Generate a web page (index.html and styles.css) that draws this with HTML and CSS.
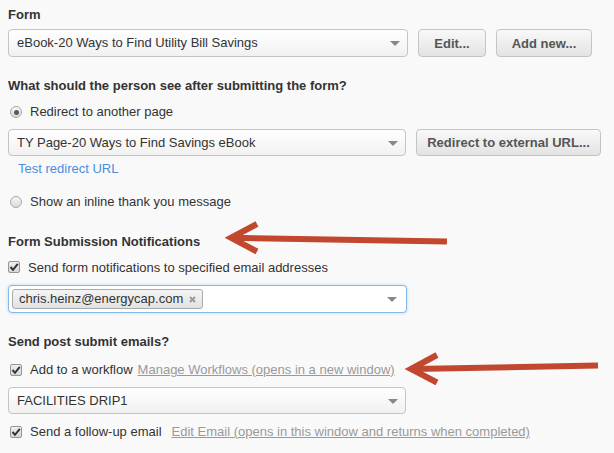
FILE: index.html
```html
<!DOCTYPE html>
<html>
<head>
<meta charset="utf-8">
<link rel="stylesheet" href="styles.css">
</head>
<body>
<div class="page">
  <div class="label l-form">Form</div>
  <div class="row r-form">
    <div class="select s-form"><span>eBook-20 Ways to Find Utility Bill Savings</span><span class="caret"></span></div>
    <button class="btn b-edit">Edit...</button>
    <button class="btn b-add">Add new...</button>
  </div>

  <div class="label l-after">What should the person see after submitting the form?</div>
  <div class="opt o-redirect"><span class="radio on"></span>Redirect to another page</div>
  <div class="row r-redirect">
    <div class="select s-redirect"><span>TY Page-20 Ways to Find Savings eBook</span><span class="caret"></span></div>
    <button class="btn b-ext">Redirect to external URL...</button>
  </div>
  <div class="test"><a class="link-blue">Test redirect URL</a></div>
  <div class="opt o-inline"><span class="radio"></span>Show an inline thank you message</div>

  <div class="label l-notif">Form Submission Notifications</div>
  <div class="opt o-notif"><span class="cb cb-first"><svg width="10" height="10" viewBox="0 0 10 10"><path d="M1.5 5 L4 7.8 L8.8 1.8" fill="none" stroke="#333" stroke-width="2"/></svg></span>Send form notifications to specified email addresses</div>
  <div class="select s-email">
    <span class="tag">chris.heinz@energycap.com<svg class="x" width="7" height="7" viewBox="0 0 7 7"><path d="M1 1 L6 6 M6 1 L1 6" stroke="#999" stroke-width="2"/></svg></span>
    <span class="caret"></span>
  </div>

  <div class="label l-post">Send post submit emails?</div>
  <div class="opt o-flow"><span class="cb"><svg width="10" height="10" viewBox="0 0 10 10"><path d="M1.5 5 L4 7.8 L8.8 1.8" fill="none" stroke="#333" stroke-width="2"/></svg></span>Add to a workflow<a class="link-gray l-manage">Manage Workflows (opens in a new window)</a></div>
  <div class="select s-flow"><span>FACILITIES DRIP1</span><span class="caret"></span></div>
  <div class="opt o-follow"><span class="cb"><svg width="10" height="10" viewBox="0 0 10 10"><path d="M1.5 5 L4 7.8 L8.8 1.8" fill="none" stroke="#333" stroke-width="2"/></svg></span>Send a follow-up email<a class="link-gray l-edit">Edit Email (opens in this window and returns when completed)</a></div>

  <svg class="arrows" width="614" height="453" viewBox="0 0 614 453">
    <g fill="none" stroke="#c1472f" stroke-width="6">
      <path d="M447 241.5 L233 237.8"/>
      <path d="M257 224 L231 237.8 L257 251.5" stroke-linejoin="miter" stroke-miterlimit="10"/>
      <path d="M598 365.5 L413 369"/>
      <path d="M437 355 L411 369 L437 382.5" stroke-linejoin="miter" stroke-miterlimit="10"/>
    </g>
  </svg>
</div>
</body>
</html>
```

FILE: styles.css
```css
html, body {
  margin: 0;
  padding: 0;
}
body {
  background: #f9f9f9;
  font-family: "Liberation Sans", Arial, sans-serif;
  font-size: 13px;
  line-height: 16px;
  color: #333;
}
.page {
  position: relative;
  box-sizing: border-box;
  width: 614px;
  height: 453px;
  padding: 7px 8px 0 8px;
  overflow: hidden;
}
.label {
  font-weight: bold;
  color: #333;
}
.row {
  display: flex;
  align-items: center;
}
.select {
  box-sizing: border-box;
  display: flex;
  align-items: center;
  justify-content: space-between;
  height: 28px;
  padding: 0 7px 0 8px;
  border: 1px solid #c4c4c4;
  border-radius: 4px;
  background: linear-gradient(#ffffff, #f1f1f1);
  color: #333;
}
.caret {
  width: 0;
  height: 0;
  border-left: 5px solid transparent;
  border-right: 5px solid transparent;
  border-top: 5px solid #888;
  margin-top: 1px;
}
.btn {
  box-sizing: border-box;
  height: 28px;
  padding: 0;
  border: 1px solid #c4c4c4;
  border-radius: 4px;
  background: linear-gradient(#f9f9f9, #e3e3e3);
  font-family: "Liberation Sans", Arial, sans-serif;
  font-size: 13px;
  font-weight: bold;
  color: #555;
  text-align: center;
}
.r-form { margin-top: 6px; }
.s-form { width: 400px; }
.b-edit { width: 68px; margin-left: 10px; }
.b-add { width: 96px; margin-left: 10px; }

.l-after { margin-top: 21px; }
.opt {
  display: flex;
  align-items: center;
  height: 16px;
}
.radio {
  box-sizing: border-box;
  display: flex;
  align-items: center;
  justify-content: center;
  width: 12px;
  height: 12px;
  margin: 0 8px 0 2px;
  border: 1px solid #a8a8a8;
  border-radius: 50%;
  background: linear-gradient(#f6f6f6, #dadada);
}
.radio.on::after {
  content: "";
  width: 5px;
  height: 5px;
  border-radius: 50%;
  background: #5a5a5a;
}
.o-redirect { margin-top: 10px; }
.r-redirect { margin-top: 9px; }
.s-redirect { width: 398px; height: 27px; }
.b-ext { width: 185px; height: 27px; margin-left: 10px; }
.test {
  margin-top: 5px;
  padding-left: 10px;
}
.link-blue {
  color: #4a8ee0;
  text-decoration: none;
}
.o-inline { margin-top: 17px; }

.l-notif { margin-top: 24px; }
.cb {
  box-sizing: border-box;
  display: flex;
  align-items: center;
  justify-content: center;
  width: 12px;
  height: 12px;
  margin: 0 8px 0 2px;
  border: 1px solid #959595;
  border-radius: 2px;
  background: linear-gradient(#efefef, #d6d6d6);
}
.cb-first {
  margin: -3px 8px 0 0;
}
.o-notif { margin-top: 10px; }
.s-email {
  margin-top: 9px;
  width: 399px;
  padding-left: 3px;
  padding-right: 9px;
  border-color: #86b9e6;
  background: #fff;
  box-shadow: 0 0 3px rgba(90, 160, 230, 0.45);
}
.tag {
  box-sizing: border-box;
  display: flex;
  align-items: center;
  height: 20px;
  width: 191px;
  padding: 0 6px 0 6px;
  border: 1px solid #aaa;
  border-radius: 3px;
  background: linear-gradient(#f5f5f5, #e2e2e2);
  color: #333;
}
.tag .x {
  margin-left: auto;
}

.l-post { margin-top: 21px; }
.o-flow { margin-top: 12px; }
.link-gray {
  color: #999;
  text-decoration: underline;
}
.l-manage { margin-left: 5px; }
.s-flow { margin-top: 9px; width: 398px; height: 27px; }
.o-follow { margin-top: 10px; }
.l-edit { margin-left: 10px; }

.arrows {
  position: absolute;
  left: 0;
  top: 0;
  pointer-events: none;
}
```
